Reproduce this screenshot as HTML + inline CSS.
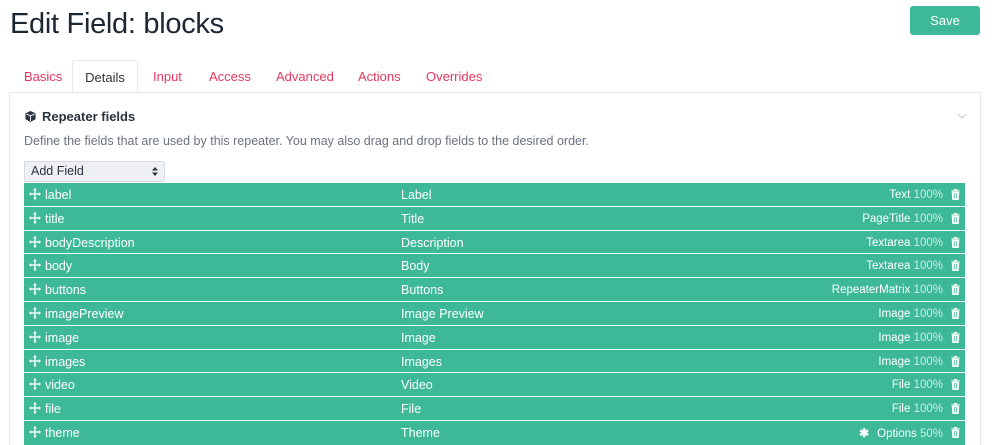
<!DOCTYPE html>
<html><head><style>
*{margin:0;padding:0;box-sizing:border-box}
html,body{width:1000px;height:445px;overflow:hidden}
body{background:#fff;font-family:"Liberation Sans",sans-serif;color:#1f2937;position:relative}
h1{position:absolute;left:10px;top:8px;font-size:29px;font-weight:normal;color:#1c2733;letter-spacing:-0.3px}
.save{position:absolute;left:910px;top:6px;width:70px;height:29px;background:#3eb998;color:#fff;border-radius:3px;font-size:13px;text-align:center;line-height:29px}
.tabs{position:absolute;left:9px;top:60px;height:33px;font-size:13px}
.tab{position:absolute;top:0;height:33px;line-height:33px;color:#e8385e;white-space:nowrap}
.tab.act{color:#333;background:#fff;border:1px solid #e5e9ee;border-bottom:none;border-radius:3px 3px 0 0;text-align:center}
.panel{position:absolute;left:9px;top:92px;width:972px;height:353px;border:1px solid #e5e9ee;border-bottom:none;background:#fff}
.hd{position:absolute;left:26px;top:109px;font-size:13px;font-weight:bold;color:#2b3440}
.desc{position:absolute;left:24px;top:134px;font-size:12.5px;color:#6b7280}
.sel{position:absolute;left:24px;top:161px;width:141px;height:21px;background:#eef0f4;border:1px solid #d6dbe1;border-radius:2px;font-size:12.5px;line-height:19px;padding-left:6px;color:#2b3440}
.row{position:absolute;left:24px;width:941px;height:22.8px;background:#3eb998;color:#fff;font-size:12.5px;line-height:25px;overflow:hidden}
.row .n{position:absolute;left:21px}
.row .l{position:absolute;left:377px}
.row .r{position:absolute;right:22px;font-size:11.5px}
.row .r i{font-style:normal;color:#cdeee3}
.row svg{position:absolute}
</style></head><body>
<h1>Edit Field: blocks</h1>
<div class="save">Save</div>
<div class="tabs">
<div class="tab" style="left:15px">Basics</div>
<div class="tab act" style="left:63px;width:66px">Details</div>
<div class="tab" style="left:144px">Input</div>
<div class="tab" style="left:200px">Access</div>
<div class="tab" style="left:267px">Advanced</div>
<div class="tab" style="left:349px">Actions</div>
<div class="tab" style="left:417px">Overrides</div>
</div>
<div class="panel"></div>
<svg width="8" height="5" viewBox="0 0 8 5" style="position:absolute;left:958px;top:114px"><path d="M0.5 0.5L4 4L7.5 0.5" stroke="#c0c6cc" fill="none"/></svg>
<div class="hd"><svg width="11" height="11" viewBox="0 0 12 12" style="position:absolute;left:-1px;top:2px"><path d="M6 0L11.5 2.5V9L6 12L0.5 9V2.5Z" fill="#2b3440"/><path d="M1.5 3.2L6 5.3L10.5 3.2M6 5.3V11" stroke="#fff" fill="none" stroke-width="1"/></svg><span style="margin-left:16px">Repeater fields</span></div>
<div class="desc">Define the fields that are used by this repeater. You may also drag and drop fields to the desired order.</div>
<div class="sel">Add Field<svg width="6" height="9" viewBox="0 0 6 9" style="position:absolute;right:6px;top:5px"><path d="M3 0L6 3.5H0ZM3 9L6 5.5H0Z" fill="#2b3440"/></svg></div>
<div id="rows"></div>
<script>
var d=[["label","Label","Text","100%"],["title","Title","PageTitle","100%"],["bodyDescription","Description","Textarea","100%"],["body","Body","Textarea","100%"],["buttons","Buttons","RepeaterMatrix","100%"],["imagePreview","Image Preview","Image","100%"],["image","Image","Image","100%"],["images","Images","Image","100%"],["video","Video","File","100%"],["file","File","File","100%"],["theme","Theme","Options","50%"]];
var h="";
d.forEach(function(r,i){var t=183+i*23.8;var hh=(i==10)?(445-t):22.8;
h+='<div class="row" style="top:'+t+'px;height:'+hh+'px"><svg width="12" height="12" viewBox="0 0 12 12" style="left:5px;top:5px"><path d="M6 0.5V11.5M0.5 6H11.5" stroke="#e8f7f2" stroke-width="1.6"/><path d="M6 0L8 2.2H4ZM6 12L8 9.8H4ZM0 6L2.2 4V8ZM12 6L9.8 4V8Z" fill="#e8f7f2"/></svg><span class="n">'+r[0]+'</span><span class="l">'+r[1]+'</span><span class="r">'+(i==10?'<b style="margin-right:8px;font-size:12px">&#10033;</b>':'')+r[2]+' <i>'+r[3]+'</i></span><svg width="9" height="11" viewBox="0 0 9 11" style="right:5px;top:6px"><path d="M0 1.5H9M3 1.5V0.3H6V1.5M1 2.5H8L7.4 11H1.6Z" fill="#fff" stroke="#fff" stroke-width="0.6"/><path d="M3.3 4V9.5M5.7 4V9.5" stroke="#3eb998" stroke-width="0.8"/></svg></div>';});
document.getElementById("rows").innerHTML=h;
</script>
</body></html>
